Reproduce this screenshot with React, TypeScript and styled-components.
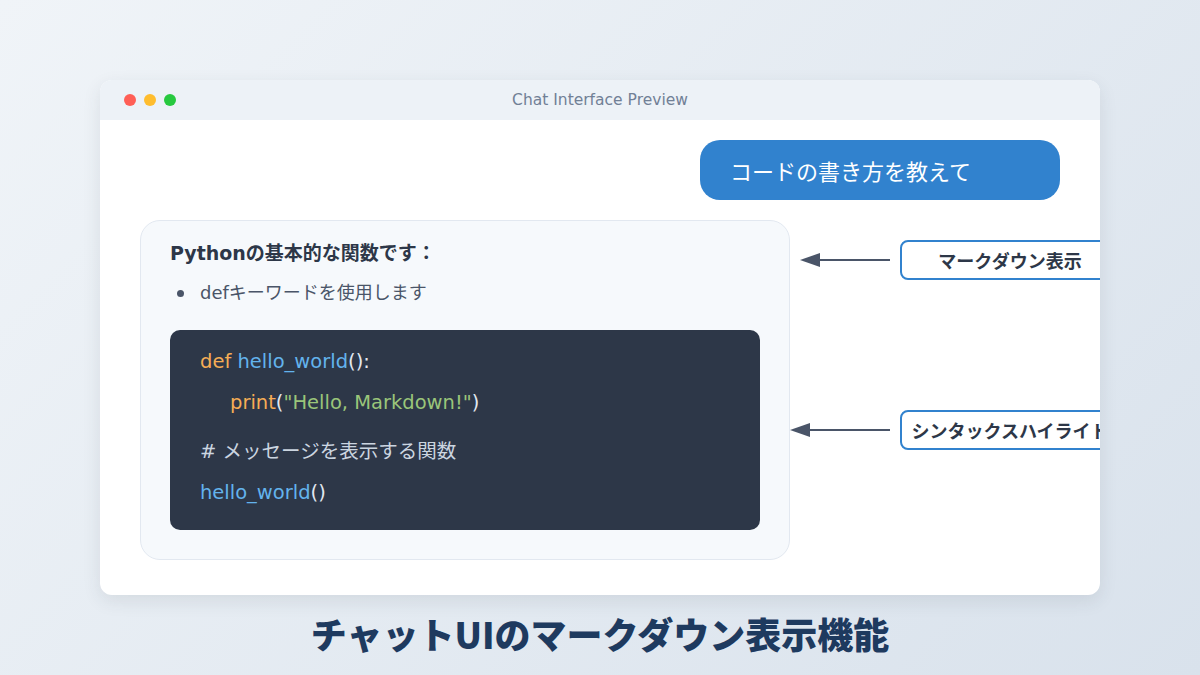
import styled, { createGlobalStyle } from "styled-components";

const GlobalStyle = createGlobalStyle`
  html, body {
    margin: 0;
    padding: 0;
  }
  body {
    font-family: "DejaVu Sans", "Noto Sans CJK JP", sans-serif;
  }
`;

const Page = styled.div`
  width: 1200px;
  height: 675px;
  box-sizing: border-box;
  padding-top: 80px;
  background: linear-gradient(135deg, #f0f4f8 0%, #d9e2ec 100%);
  display: flex;
  flex-direction: column;
  align-items: center;
`;

const Window = styled.div`
  width: 1000px;
  height: 515px;
  background: #ffffff;
  border-radius: 12px;
  overflow: hidden;
  box-shadow: 0 6px 18px rgba(45, 55, 72, 0.1);
  display: flex;
  flex-direction: column;
`;

const TitleBar = styled.div`
  height: 40px;
  background: #edf2f7;
  display: flex;
  align-items: center;
  padding: 0 24px;
  position: relative;
`;

const Dot = styled.span<{ color: string }>`
  width: 12px;
  height: 12px;
  border-radius: 50%;
  background: ${(p) => p.color};
  margin-right: 8px;
`;

const WindowTitle = styled.div`
  position: absolute;
  left: 0;
  right: 0;
  text-align: center;
  font-size: 15.5px;
  color: #718096;
  pointer-events: none;
`;

const Body = styled.div`
  flex: 1;
  padding: 20px 20px 0 40px;
  display: flex;
  flex-direction: column;
`;

const UserRow = styled.div`
  display: flex;
  justify-content: flex-end;
  padding-right: 20px;
`;

const UserBubble = styled.div`
  width: 360px;
  height: 60px;
  box-sizing: border-box;
  background: #3182ce;
  color: #ffffff;
  border-radius: 20px;
  font-size: 22px;
  padding-left: 30px;
  display: flex;
  align-items: center;
`;

const MainRow = styled.div`
  margin-top: 20px;
  display: flex;
  align-items: flex-start;
`;

const AssistantCard = styled.div`
  flex-shrink: 0;
  width: 650px;
  height: 340px;
  box-sizing: border-box;
  background: #f6f9fc;
  border: 1px solid #e2e8f0;
  border-radius: 20px;
  padding: 18px 29px 0 29px;
`;

const Heading = styled.div`
  font-size: 19px;
  font-weight: bold;
  color: #2d3748;
  line-height: 28px;
`;

const BulletList = styled.ul`
  margin: 14px 0 0 0;
  padding: 0;
  list-style: none;
`;

const BulletItem = styled.li`
  display: flex;
  align-items: center;
  font-size: 18px;
  color: #4a5568;
  line-height: 24px;
  &::before {
    content: "";
    width: 7px;
    height: 7px;
    border-radius: 50%;
    background: #4a5568;
    margin: 0 16px 0 7px;
  }
`;

const CodeBlock = styled.div`
  margin-top: 25px;
  height: 200px;
  box-sizing: border-box;
  background: #2d3748;
  border-radius: 10px;
  padding: 20px 30px 0 30px;
  font-size: 19.5px;
`;

const CodeLine = styled.div<{ indent?: boolean; gap?: number }>`
  height: 24px;
  line-height: 24px;
  white-space: pre;
  margin-top: ${(p) => p.gap ?? 0}px;
  padding-left: ${(p) => (p.indent ? 30 : 0)}px;
  color: #e2e8f0;
`;

const Kw = styled.span`
  color: #f6ad55;
`;

const Fn = styled.span`
  color: #63b3ed;
`;

const Str = styled.span`
  color: #9ac57a;
`;

const Comment = styled.span`
  color: #cbd5e0;
`;

const Notes = styled.div`
  flex: 1;
  display: flex;
  flex-direction: column;
  align-items: flex-end;
  padding-top: 20px;
`;

const Note = styled.div<{ gap?: number }>`
  display: flex;
  align-items: center;
  margin-top: ${(p) => p.gap ?? 0}px;
`;

const NoteLabel = styled.div`
  width: 220px;
  height: 40px;
  box-sizing: border-box;
  border: 2px solid #3182ce;
  border-radius: 8px;
  background: #ffffff;
  color: #2d3748;
  font-size: 18px;
  font-weight: bold;
  display: flex;
  align-items: center;
  justify-content: center;
  margin-left: 10px;
`;

const Footer = styled.h1`
  margin: 12px 0 0 0;
  font-size: 36px;
  font-weight: 900;
  color: #1e3a5f;
  font-family: "Noto Sans CJK JP", sans-serif;
`;

function Arrow({ length }: { length: number }) {
  return (
    <svg width={length} height="16" viewBox={`0 0 ${length} 16`}>
      <polygon points="0,8 20,1 20,15" fill="#4a5568" />
      <line x1="18" y1="8" x2={length} y2="8" stroke="#4a5568" strokeWidth="2" />
    </svg>
  );
}

export default function App() {
  return (
    <>
      <GlobalStyle />
      <Page>
        <Window>
          <TitleBar>
            <Dot color="#ff5f56" />
            <Dot color="#ffbd2e" />
            <Dot color="#27c93f" />
            <WindowTitle>Chat Interface Preview</WindowTitle>
          </TitleBar>
          <Body>
            <UserRow>
              <UserBubble>コードの書き方を教えて</UserBubble>
            </UserRow>
            <MainRow>
              <AssistantCard>
                <Heading>Pythonの基本的な関数です：</Heading>
                <BulletList>
                  <BulletItem>defキーワードを使用します</BulletItem>
                </BulletList>
                <CodeBlock>
                  <CodeLine>
                    <Kw>def</Kw> <Fn>hello_world</Fn>():
                  </CodeLine>
                  <CodeLine indent gap={17}>
                    <Kw>print</Kw>(<Str>"Hello, Markdown!"</Str>)
                  </CodeLine>
                  <CodeLine gap={25}>
                    <Comment># メッセージを表示する関数</Comment>
                  </CodeLine>
                  <CodeLine gap={17}>
                    <Fn>hello_world</Fn>()
                  </CodeLine>
                </CodeBlock>
              </AssistantCard>
              <Notes>
                <Note>
                  <Arrow length={90} />
                  <NoteLabel>マークダウン表示</NoteLabel>
                </Note>
                <Note gap={130}>
                  <Arrow length={100} />
                  <NoteLabel>シンタックスハイライト</NoteLabel>
                </Note>
              </Notes>
            </MainRow>
          </Body>
        </Window>
        <Footer>チャットUIのマークダウン表示機能</Footer>
      </Page>
    </>
  );
}
